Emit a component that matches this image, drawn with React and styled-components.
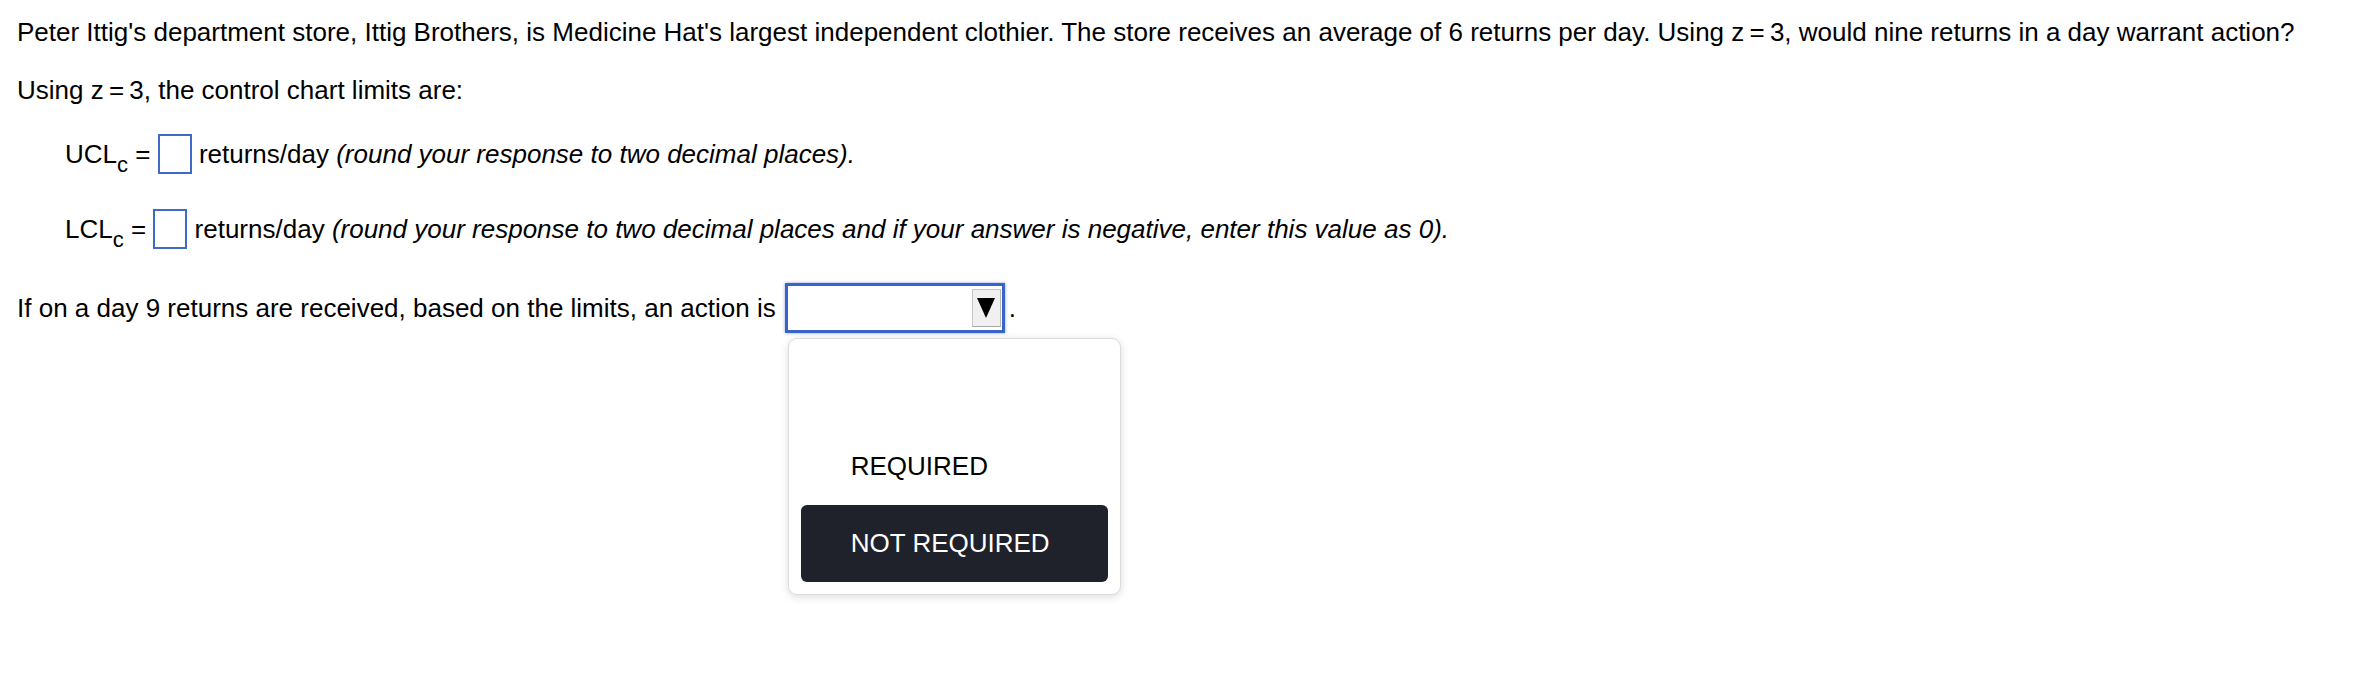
import styled, { createGlobalStyle } from "styled-components";

const GlobalStyle = createGlobalStyle`
  html, body {
    margin: 0;
    background: #ffffff;
  }
  body {
    font-family: "Liberation Sans", Arial, sans-serif;
    color: #000000;
  }
`;

const Page = styled.div`
  position: relative;
  box-sizing: border-box;
  min-height: 100vh;
  padding: 17.5px 17px 0 17px;
  font-size: 26px;
  line-height: 29px;
`;

const Para = styled.p`
  margin: 0 0 ${({ $gap }) => $gap}px 0;
  white-space: nowrap;
`;

const Row = styled.div`
  margin: 0 0 ${({ $gap }) => $gap}px ${({ $indent }) => $indent}px;
  white-space: nowrap;
`;

const SelectRow = styled.div`
  display: flex;
  align-items: center;
  white-space: nowrap;
`;

const Sub = styled.span`
  position: relative;
  top: 9px;
  font-size: 22px;
  line-height: 0;
`;

const AnswerBox = styled.span`
  display: inline-block;
  box-sizing: border-box;
  width: 34px;
  height: 40px;
  border: 2px solid #4169c6;
  background: #ffffff;
  vertical-align: -11px;
`;

const Hint = styled.i`
  font-style: italic;
`;

const SelectWrap = styled.div`
  position: relative;
  margin-left: 9px;
`;

const SelectBox = styled.div`
  display: flex;
  justify-content: flex-end;
  align-items: center;
  box-sizing: border-box;
  width: 220px;
  height: 50px;
  padding: 0 1px;
  border: 3px solid #3a63c8;
  box-shadow: 0 0 3px rgba(58, 99, 200, 0.6);
  background: #ffffff;
`;

const ArrowButton = styled.div`
  display: flex;
  align-items: center;
  justify-content: center;
  box-sizing: border-box;
  width: 29px;
  height: 38px;
  background: #f0f0f0;
  border: 1px solid #c8c8c8;
  border-bottom-color: #a9a9a9;
  border-right-color: #b5b5b5;
`;

const Triangle = styled.div`
  width: 0;
  height: 0;
  border-left: 9px solid transparent;
  border-right: 9px solid transparent;
  border-top: 20px solid #000000;
`;

const Dot = styled.span`
  margin-left: 4px;
`;

const Menu = styled.div`
  position: absolute;
  top: 55px;
  left: 3px;
  box-sizing: border-box;
  width: 333px;
  padding: 12px;
  background: #ffffff;
  border: 1px solid #dcdcdc;
  border-radius: 9px;
  box-shadow: 0 2px 8px rgba(0, 0, 0, 0.14);
  z-index: 10;
`;

const Option = styled.div`
  display: flex;
  align-items: center;
  height: 77px;
  padding-left: 50px;
  border-radius: 6px;
  font-size: 26px;
  background: ${({ $active }) => ($active ? "#1f222b" : "transparent")};
  color: ${({ $active }) => ($active ? "#ffffff" : "#000000")};
`;

const options = [
  { label: "", active: false },
  { label: "REQUIRED", active: false },
  { label: "NOT REQUIRED", active: true },
];

export default function App() {
  return (
    <>
      <GlobalStyle />
      <Page>
        <Para $gap={29}>
          Peter Ittig's department store, Ittig Brothers, is Medicine Hat's
          largest independent clothier. The store receives an average of 6
          returns per day. Using z&#8201;=&#8201;3, would nine returns in a day
          warrant action?
        </Para>
        <Para $gap={29.5}>Using z&#8201;=&#8201;3, the control chart limits are:</Para>
        <Row $indent={48} $gap={35}>
          UCL<Sub>c</Sub> = <AnswerBox /> returns/day{" "}
          <Hint>(round your response to two decimal places).</Hint>
        </Row>
        <Row $indent={48} $gap={34}>
          LCL<Sub>c</Sub> = <AnswerBox /> returns/day{" "}
          <Hint>
            (round your response to two decimal places and if your answer is
            negative, enter this value as 0).
          </Hint>
        </Row>
        <SelectRow>
          <span>
            If on a day 9 returns are received, based on the limits, an action
            is
          </span>
          <SelectWrap>
            <SelectBox>
              <ArrowButton>
                <Triangle />
              </ArrowButton>
            </SelectBox>
            <Menu>
              {options.map((o, i) => (
                <Option key={i} $active={o.active}>
                  {o.label}
                </Option>
              ))}
            </Menu>
          </SelectWrap>
          <Dot>.</Dot>
        </SelectRow>
      </Page>
    </>
  );
}
